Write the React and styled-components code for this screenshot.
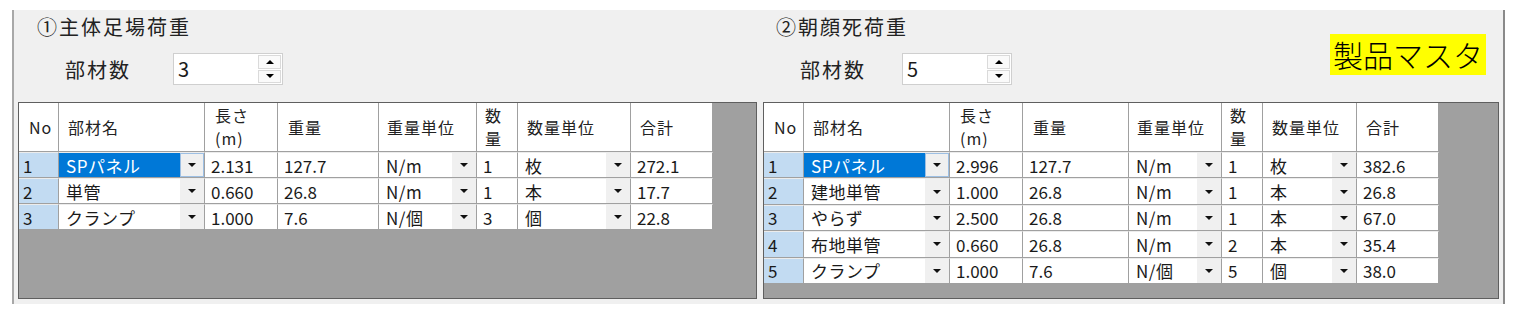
import React from "react";
import styled, { createGlobalStyle } from "styled-components";

const GlobalStyle = createGlobalStyle`
  body {
    margin: 0;
    background: #fff;
    font-family: "Noto Sans CJK JP", "Noto Sans", sans-serif;
    color: #1a1a1a;
  }
`;

const Panel = styled.div`
  box-sizing: border-box;
  margin: 10px 0 0 12px;
  width: 1493px;
  height: 294px;
  background: #f0f0f0;
  border-left: 2px solid #a8a8a8;
  border-right: 2px solid #8a8a8a;
  padding: 0 4px;
  display: flex;
  gap: 6px;
`;

const Section = styled.div`
  width: ${p => p.width}px;
  display: flex;
  flex-direction: column;
`;

const Head = styled.div`
  height: 92px;
  display: flex;
  justify-content: space-between;
  align-items: flex-start;
`;

const HeadLeft = styled.div`
  display: flex;
  flex-direction: column;
`;

const Title = styled.div`
  height: 34px;
  line-height: 34px;
  font-size: 20px;
  letter-spacing: 2px;
  padding-left: ${p => p.indent}px;
  color: #222;
`;

const SpinRow = styled.div`
  margin-top: 9px;
  display: flex;
  align-items: center;
  padding-left: ${p => p.indent}px;
`;

const Label = styled.div`
  width: ${p => p.width}px;
  font-size: 20px;
  letter-spacing: 2px;
  color: #222;
`;

const SpinBox = styled.div`
  box-sizing: border-box;
  width: 110px;
  height: 32px;
  background: #fff;
  border: 1px solid #cfcfcf;
  display: flex;
`;

const SpinValue = styled.div`
  flex: 1;
  font-size: 20px;
  line-height: 30px;
  padding-left: 4px;
`;

const SpinButtons = styled.div`
  width: 23px;
  display: flex;
  flex-direction: column;
  gap: 1px;
  padding: 1px 1px 1px 0;
`;

const SpinBtn = styled.div`
  flex: 1;
  background: #fafafa;
  border: 1px solid #dadada;
  display: flex;
  align-items: center;
  justify-content: center;
`;

const Tri = styled.div`
  width: 0;
  height: 0;
  border-left: 4px solid transparent;
  border-right: 4px solid transparent;
  ${p => (p.up ? "border-bottom: 4px solid #000;" : "border-top: 4px solid #000;")}
`;

const Badge = styled.div`
  margin-top: 24px;
  margin-right: 13px;
  height: 41px;
  line-height: 41px;
  padding: 0 3px;
  background: #ffff00;
  color: #000;
  font-size: 30px;
  font-weight: 300;
`;

const Grid = styled.div`
  box-sizing: border-box;
  height: 197px;
  background: #a0a0a0;
  border: 1px solid #5f5f5f;
`;

const Table = styled.div`
  display: grid;
  grid-template-columns: ${p => p.cols};
  grid-template-rows: 49px;
  grid-auto-rows: ${p => p.rowH}px;
  width: max-content;
  font-size: 16px;
`;

const HeadCell = styled.div`
  box-sizing: border-box;
  background: #fff;
  border-right: 1px solid #a0a0a0;
  border-bottom: 1px solid #a0a0a0;
  display: flex;
  align-items: center;
  padding-left: ${p => p.pad || 9}px;
  line-height: 23px;
  letter-spacing: 1px;
  color: #222;
`;

const Cell = styled.div`
  box-sizing: border-box;
  background: ${p => (p.rowHead ? "#c2dbf2" : "#fff")};
  border-right: 1px solid #a0a0a0;
  border-bottom: 1px solid #a0a0a0;
  border-top: 1px solid #ececec;
  display: flex;
  align-items: center;
  padding-left: ${p => (p.rowHead ? 4 : 6)}px;
  white-space: nowrap;
  font-size: 17px;
  color: #1a1a1a;
`;

const ComboCell = styled(Cell)`
  padding-left: 0;
  align-items: stretch;
`;

const ComboText = styled.div`
  flex: 1;
  display: flex;
  align-items: center;
  padding-left: 7px;
  letter-spacing: 0.5px;
  background: ${p => (p.selected ? "#0078d7" : "transparent")};
  color: ${p => (p.selected ? "#fff" : "inherit")};
`;

const ComboBtn = styled.div`
  box-sizing: border-box;
  width: 24px;
  background: #f0f0f0;
  border: 1px solid ${p => (p.selected ? "#9dbfe3" : "transparent")};
  display: flex;
  align-items: center;
  justify-content: center;
`;

const Arrow = styled.div`
  width: 0;
  height: 0;
  border-left: 4px solid transparent;
  border-right: 4px solid transparent;
  border-top: 4px solid #111;
`;

const headers = [
  { t: "No", pad: 10 },
  { t: "部材名" },
  { t: ["長さ", "(m)"], pad: 10 },
  { t: "重量", pad: 10 },
  { t: "重量単位", pad: 8 },
  { t: ["数", "量"], pad: 8 },
  { t: "数量単位" },
  { t: "合計" },
];

const comboCols = [1, 4, 6];

const leftRows = [
  ["1", "SPパネル", "2.131", "127.7", "N/m", "1", "枚", "272.1"],
  ["2", "単管", "0.660", "26.8", "N/m", "1", "本", "17.7"],
  ["3", "クランプ", "1.000", "7.6", "N/個", "3", "個", "22.8"],
];

const rightRows = [
  ["1", "SPパネル", "2.996", "127.7", "N/m", "1", "枚", "382.6"],
  ["2", "建地単管", "1.000", "26.8", "N/m", "1", "本", "26.8"],
  ["3", "やらず", "2.500", "26.8", "N/m", "1", "本", "67.0"],
  ["4", "布地単管", "0.660", "26.8", "N/m", "2", "本", "35.4"],
  ["5", "クランプ", "1.000", "7.6", "N/個", "5", "個", "38.0"],
];

const Spin = ({ value }) => (
  <SpinBox>
    <SpinValue>{value}</SpinValue>
    <SpinButtons>
      <SpinBtn>
        <Tri up />
      </SpinBtn>
      <SpinBtn>
        <Tri />
      </SpinBtn>
    </SpinButtons>
  </SpinBox>
);

const DataGrid = ({ cols, rows, rowH }) => (
  <Grid>
    <Table cols={cols.map(c => c + "px").join(" ")} rowH={rowH}>
      {headers.map((h, i) => (
        <HeadCell key={"h" + i} pad={h.pad}>
          {Array.isArray(h.t) ? (
            <span>
              {h.t[0]}
              <br />
              {h.t[1]}
            </span>
          ) : (
            h.t
          )}
        </HeadCell>
      ))}
      {rows.map((r, ri) =>
        r.map((v, ci) => {
          if (comboCols.includes(ci)) {
            const sel = ri === 0 && ci === 1;
            return (
              <ComboCell key={ri + "-" + ci}>
                <ComboText selected={sel}>{v}</ComboText>
                <ComboBtn selected={sel}>
                  <Arrow />
                </ComboBtn>
              </ComboCell>
            );
          }
          return (
            <Cell key={ri + "-" + ci} rowHead={ci === 0}>
              {v}
            </Cell>
          );
        })
      )}
    </Table>
  </Grid>
);

const App = () => (
  <>
    <GlobalStyle />
    <Panel>
      <Section width={739}>
        <Head>
          <HeadLeft>
            <Title indent={19}>①主体足場荷重</Title>
            <SpinRow indent={47}>
              <Label width={108}>部材数</Label>
              <Spin value="3" />
            </SpinRow>
          </HeadLeft>
        </Head>
        <DataGrid cols={[40, 146, 73, 101, 98, 41, 113, 82]} rows={leftRows} rowH={26} />
      </Section>
      <Section width={736}>
        <Head>
          <HeadLeft>
            <Title indent={13}>②朝顔死荷重</Title>
            <SpinRow indent={37}>
              <Label width={102}>部材数</Label>
              <Spin value="5" />
            </SpinRow>
          </HeadLeft>
          <Badge>製品マスタ</Badge>
        </Head>
        <DataGrid cols={[40, 146, 73, 106, 93, 41, 94, 82]} rows={rightRows} rowH={26.4} />
      </Section>
    </Panel>
  </>
);

export default App;
